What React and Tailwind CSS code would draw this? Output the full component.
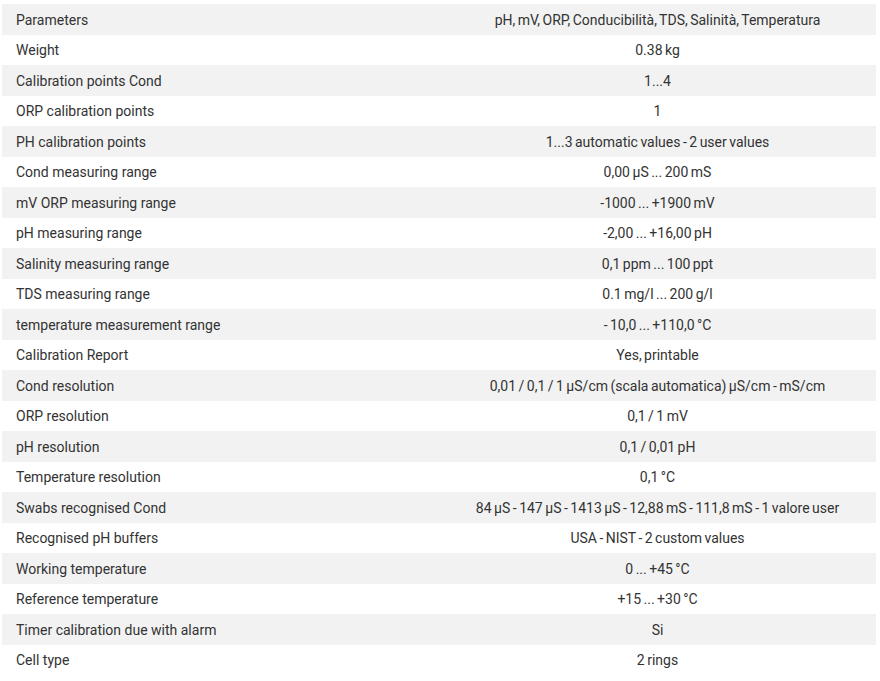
const rows = [
  ['Parameters', 'pH, mV, ORP, Conducibilità, TDS, Salinità, Temperatura'],
  ['Weight', '0.38 kg'],
  ['Calibration points Cond', '1...4'],
  ['ORP calibration points', '1'],
  ['PH calibration points', '1...3 automatic values - 2 user values'],
  ['Cond measuring range', '0,00 µS ... 200 mS'],
  ['mV ORP measuring range', '-1000 ... +1900 mV'],
  ['pH measuring range', '-2,00 ... +16,00 pH'],
  ['Salinity measuring range', '0,1 ppm ... 100 ppt'],
  ['TDS measuring range', '0.1 mg/l ... 200 g/l'],
  ['temperature measurement range', '- 10,0 ... +110,0 °C'],
  ['Calibration Report', 'Yes, printable'],
  ['Cond resolution', '0,01 / 0,1 / 1 µS/cm (scala automatica) µS/cm - mS/cm'],
  ['ORP resolution', '0,1 / 1 mV'],
  ['pH resolution', '0,1 / 0,01 pH'],
  ['Temperature resolution', '0,1 °C'],
  ['Swabs recognised Cond', '84 µS - 147 µS - 1413 µS - 12,88 mS - 111,8 mS - 1 valore user'],
  ['Recognised pH buffers', 'USA - NIST - 2 custom values'],
  ['Working temperature', '0 ... +45 °C'],
  ['Reference temperature', '+15 ... +30 °C'],
  ['Timer calibration due with alarm', 'Si'],
  ['Cell type', '2 rings'],
]

const App = () => {
  return (
    <div className="bg-white pt-[4px] pl-[2px] font-['Roboto',sans-serif] text-[14px] text-[#333]">
      <table className="w-[874px] table-fixed border-collapse">
        <tbody>
          {rows.map(([label, value], i) => (
            <tr key={label} className={i % 2 === 0 ? 'h-[30.5px] bg-[#f2f2f2]' : 'h-[30.5px] bg-white'}>
              <td className="w-1/2 pl-[14px] pt-[2px] pb-0 align-middle">{label}</td>
              <td className="w-1/2 px-2 pt-[2px] pb-0 text-center align-middle [word-spacing:-1px]">{value}</td>
            </tr>
          ))}
        </tbody>
      </table>
    </div>
  )
}

export default App
